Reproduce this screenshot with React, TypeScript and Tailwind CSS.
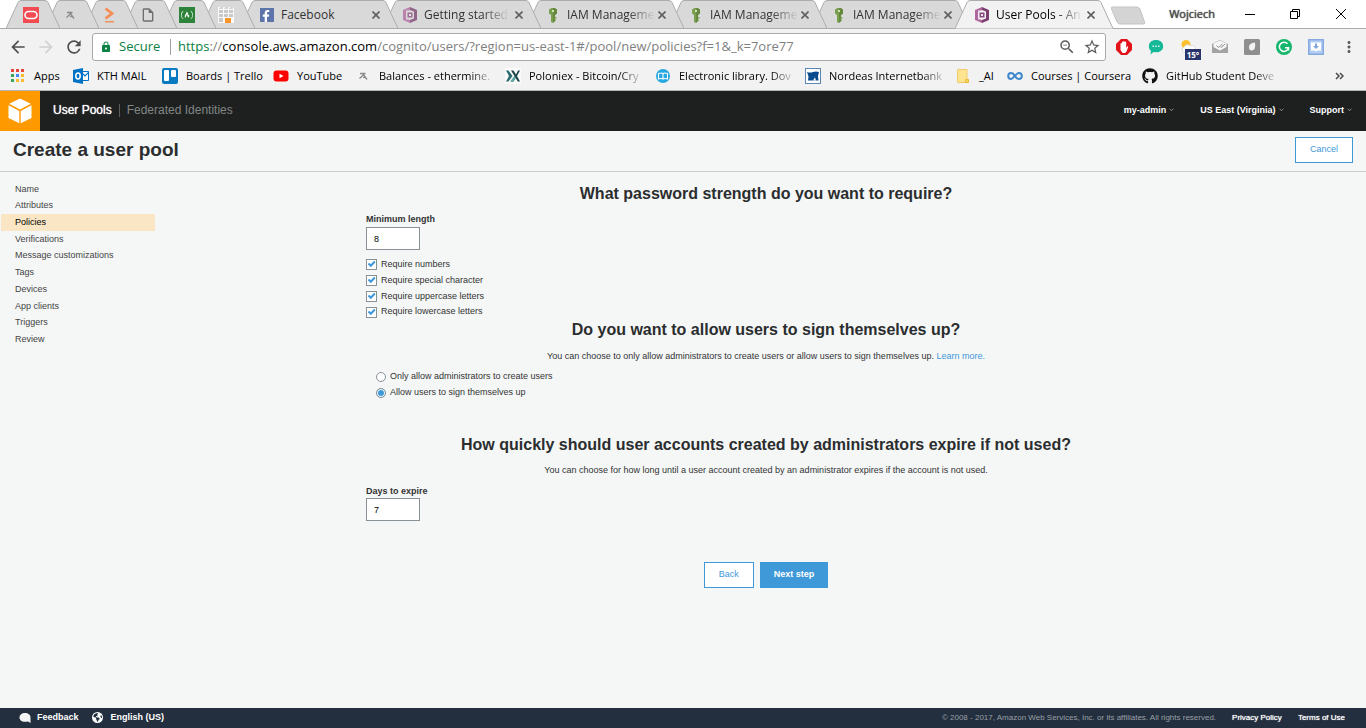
import React from "react";
import {
  MdArrowBack,
  MdArrowForward,
  MdRefresh,
  MdStarBorder,
  MdLock,
  MdMoreVert,
  MdZoomOut,
  MdOutlineInsertDriveFile,
} from "react-icons/md";
import { FaFacebookF, FaFreeCodeCamp, FaGithub } from "react-icons/fa";
import { FaEarthAmericas } from "react-icons/fa6";

/* ---------- icons ---------- */

const OracleIcon = () => (
  <svg width="16" height="16" viewBox="0 0 16 16">
    <rect width="16" height="16" fill="#f24c52" />
    <rect x="2" y="4.5" width="12" height="7" rx="3.5" fill="none" stroke="#fff" strokeWidth="1.6" />
  </svg>
);

const EtherIcon = () => (
  <svg width="16" height="16" viewBox="0 0 16 16" fill="none" stroke="#8a8a8a">
    <path d="M5 5.500h5.500M7.500 5.500L12 11.500M10 5.500L4.500 10.500" strokeWidth="1.300" />
    <path d="M8 9.500h3" strokeWidth="1.200" />
  </svg>
);

const AngleIcon = () => (
  <svg width="16" height="16" viewBox="0 0 16 16" fill="none" stroke="#f58d54" strokeWidth="2.800">
    <path d="M4.500 1.500l6.500 5-6.500 5" />
    <path d="M4 14.800h9" strokeWidth="1.400" />
  </svg>
);

const CampIcon = () => (
  <span className="flex size-4 items-center justify-center bg-[#2c8339] text-[12px] text-white">
    <FaFreeCodeCamp />
  </span>
);

const CubesIcon = () => (
  <svg width="16" height="16" viewBox="0 0 16 16">
    <rect width="16" height="16" fill="#fafafa" />
    <path d="M1 2l1.500-2h3L4.500 2zM6 2l1.500-2h3L9.500 2zM11 2l1.500-2h3L14.500 2z" fill="#d2d2d2" />
    <path d="M1 3h4v3H1zM6 3h4v3H6zM11 3h4v3h-4zM1 7h4v3H1zM6 7h4v3H6zM11 7h4v3h-4zM1 11h4v4H1z" fill="#c9c9c9" />
    <path d="M7 11h6v5H7z" fill="#f7952b" />
  </svg>
);

const FacebookIcon = () => (
  <span className="flex size-[14px] items-end justify-end bg-[#5d74ab] pr-[2px] text-[12px] text-white">
    <FaFacebookF />
  </span>
);

const CognitoIcon = ({ faded }: { faded?: boolean }) => (
  <svg width="16" height="16" viewBox="0 0 16 16" opacity={faded ? 0.75 : 1}>
    <path d="M8 0 1 3v10l7 3v-3l-4-1.500V4.500L8 3z" fill="#b0679f" />
    <path d="M8 0l7 3v10l-7 3v-3l4-1.500V4.500L8 3z" fill="#7c3d70" />
    <path d="M4 3.500h3L4 5zM4 12.500h3L4 11z" fill="#e9d5e5" />
    <path d="M5.500 5.500h5v5h-5z" fill="#8b4a7f" />
    <path d="M7 7h2v2H7z" fill="#efe3ed" />
  </svg>
);

const KeyIcon = () => (
  <svg width="16" height="16" viewBox="0 0 16 16">
    <path d="M4 2.500 6.500 1h3L12 2.500v4L10 8v6l-2 2-2-1V8L4 6.500z" fill="#7a9f4e" />
    <path d="M8 1h1.500L12 2.500v4L10 8v6l-2 2z" fill="#66893e" />
    <path d="M7 3h2v2H7z" fill="#cfdfb8" />
    <path d="M9.500 10H11.500v1.500H9.500zM9.500 12.500H11v1.300H9.500z" fill="#7a9f4e" />
  </svg>
);

const AppsIcon = () => (
  <svg width="14" height="14" viewBox="0 0 14 14">
    <path d="M0 0h3v3H0zM5 0h3v3H5zM10 0h3v3h-3z" fill="#e8453c" />
    <path d="M0 5h3v3H0zM0 10h3v3H0z" fill="#3aa757" />
    <path d="M5 5h3v3H5z" fill="#4587f4" />
    <path d="M10 5h3v3h-3zM10 10h3v3h-3zM5 10h3v3H5z" fill="#f9bb2d" />
  </svg>
);

const OutlookIcon = () => (
  <svg width="16" height="16" viewBox="0 0 16 16">
    <path d="M9 3.500h6.500v9H9z" fill="#fff" stroke="#0072c6" />
    <path d="M9 5l3 3 4-4" fill="none" stroke="#0072c6" strokeWidth="1.200" />
    <path d="M0 2 10 0v16L0 14z" fill="#0072c6" />
    <ellipse cx="5" cy="8" rx="2.200" ry="2.900" fill="none" stroke="#fff" strokeWidth="1.500" />
  </svg>
);

const TrelloIcon = () => (
  <svg width="16" height="16" viewBox="0 0 16 16">
    <rect width="16" height="16" rx="2" fill="#0a7bc1" />
    <rect x="2" y="2" width="5" height="11" rx="1" fill="#fff" />
    <rect x="9" y="2" width="5" height="7" rx="1" fill="#fff" />
  </svg>
);

const YoutubeIcon = () => (
  <svg width="16" height="16" viewBox="0 0 16 16">
    <rect x="0.500" y="2.500" width="15" height="11" rx="3" fill="#f00" />
    <path d="M6.500 5.700 10.500 8l-4 2.300z" fill="#fff" />
  </svg>
);

const PoloniexIcon = () => (
  <svg width="16" height="16" viewBox="0 0 16 16">
    <rect width="16" height="16" fill="#fafafa" />
    <path d="M1 2.500h2.500L7.500 8l-4 5.500H1L4 8z" fill="#2c6a70" />
    <path d="M6 2.500h2.500L11 6.500l2-4h2L12 8l3 5.500h-2.200L10.500 9.800 8.500 13.500H6L9.500 8z" fill="#1d4248" />
    <path d="M5 13.500L9.500 8 11 10l-2.500 3.500z" fill="#5aa6a5" />
  </svg>
);

const LibraryIcon = () => (
  <svg width="16" height="16" viewBox="0 0 16 16">
    <circle cx="8" cy="8" r="7" fill="#27a8e0" />
    <path d="M3.500 5.500Q6 4.500 8 5.500 10 4.500 12.500 5.500v5.500Q10 10 8 11 6 10 3.500 11zM8 5.500V11" fill="none" stroke="#fff" strokeWidth="1.100" />
  </svg>
);

const NordeaIcon = () => (
  <svg width="16" height="16" viewBox="0 0 16 16">
    <rect x="0.500" y="0.500" width="15" height="15" fill="#fff" stroke="#5a87b4" />
    <path d="M2 4q3 1 6 0t6 0l-1 4 .5 4.500H3l.500-4z" fill="#0a4a8f" />
    <path d="M8 12.500l3.500-5.500L10 9.500l1 3z" fill="#fff" />
  </svg>
);

const FolderIcon = () => (
  <svg width="14" height="16" viewBox="0 0 14 16">
    <path d="M1.500 1.500h9.500v10h1.500v3h-11z" fill="#fee391" stroke="#f0cd6a" />
    <path d="M9.500 14.500v-3h3v3z" fill="#fbd35a" stroke="#e8bb3f" />
  </svg>
);

const CourseraIcon = () => (
  <svg width="16" height="16" viewBox="0 0 16 16" fill="none" stroke="#3d87cc" strokeWidth="2">
    <path d="M8 8C6.500 5.500 5.500 5 4.200 5a3 3 0 1 0 0 6C6.500 11 9 5 11.800 5a3 3 0 1 1 0 6C10.500 11 9.500 10.500 8 8z" />
  </svg>
);

const AwsCube = () => (
  <svg width="24" height="26" viewBox="0 0 24 26" fill="#fff">
    <path d="M12 0.500 22.800 5.800 12 11.400 1.200 5.800z" />
    <path d="M0.500 7.300 11.300 13v12.300L0.500 20z" />
    <path d="M23.500 7.300 12.700 13v12.300L23.500 20z" />
  </svg>
);

const BubbleIcon = () => (
  <svg width="12" height="12" viewBox="0 0 12 12" fill="#f4f4f4">
    <path d="M6 1c3.300 0 5.500 1.900 5.500 4.300V11l-2.500-1.600A8 8 0 0 1 6 9.800C2.800 9.800.5 7.900.5 5.400S2.800 1 6 1z" />
  </svg>
);

const Caret = () => (
  <svg width="5" height="4" viewBox="0 0 5 4" fill="none" stroke="#8a8d8d">
    <path d="M0.500 0.700l2 2 2-2" />
  </svg>
);

/* ---------- browser tabs ---------- */

const CloseMark = () => (
  <svg width="8" height="8" viewBox="0 0 8 8" stroke="#5f5f5f" strokeWidth="1.600">
    <path d="M0.500 0.500l7 7M7.500 0.500l-7 7" />
  </svg>
);

type Tab = { icon: React.ReactNode; title?: string; active?: boolean; fade?: boolean; label: string };

const tabs: Tab[] = [
  { icon: <OracleIcon />, label: "Oracle" },
  { icon: <EtherIcon />, label: "Ethermine" },
  { icon: <AngleIcon />, label: "Courses" },
  { icon: <MdOutlineInsertDriveFile className="size-4 text-[#6e6e6e]" />, label: "Document" },
  { icon: <CampIcon />, label: "freeCodeCamp" },
  { icon: <CubesIcon />, label: "Console" },
  { icon: <FacebookIcon />, title: "Facebook", label: "Facebook" },
  { icon: <CognitoIcon faded />, title: "Getting started", fade: true, label: "Getting started" },
  { icon: <KeyIcon />, title: "IAM Manageme", fade: true, label: "IAM Management" },
  { icon: <KeyIcon />, title: "IAM Manageme", fade: true, label: "IAM Management" },
  { icon: <KeyIcon />, title: "IAM Manageme", fade: true, label: "IAM Management" },
  { icon: <CognitoIcon />, title: "User Pools - An", fade: true, active: true, label: "User Pools" },
];

function BrowserTab({ tab, order }: { tab: Tab; order: number }) {
  const w = tab.title ? 158 : 54;
  const fill = tab.active ? "#f2f2f2" : "#d9d9d9";
  return (
    <div
      className={`relative -mr-[15px] flex h-[29px] shrink-0 items-center ${
        tab.title ? "w-[158px] pl-[19px] pr-[18px]" : "w-[54px] justify-center pr-[4px]"
      }`}
      style={{ zIndex: tab.active ? 20 : order }}
    >
      <svg className="absolute inset-0" width={w} height="29" viewBox={`0 0 ${w} 29`}>
        <path
          d={`M0 28.500L12 2.500Q13 0.500 15 0.500H${w - 15}Q${w - 13} 0.500 ${w - 12} 2.500L${w} 28.500`}
          fill={fill}
          stroke="#acacac"
        />
        {!tab.active && <path d={`M0 28.500H${w}`} stroke="#acacac" />}
      </svg>
      <button
        aria-label={tab.label}
        className={`relative flex items-center text-left text-[12px] leading-[16px] ${
          tab.active ? "text-black" : "text-[#333]"
        }`}
      >
        <span className="flex w-4 shrink-0 justify-center">{tab.icon}</span>
        {tab.title && (
          <span
            className={`ml-[6px] whitespace-nowrap ${
              tab.fade ? "[mask-image:linear-gradient(to_right,#000_70%,rgba(0,0,0,0.05))]" : ""
            }`}
          >
            {tab.title}
          </span>
        )}
      </button>
      {tab.title && (
        <button aria-label="Close tab" className="absolute right-[18px] top-[11px]">
          <CloseMark />
        </button>
      )}
    </div>
  );
}

function TabStrip() {
  return (
    <div className="relative flex h-[29px] items-start bg-white pl-[6px]">
      <div className="absolute inset-x-0 bottom-0 h-px bg-[#acacac]" />
      {tabs.map((t, i) => (
        <BrowserTab key={i} tab={t} order={tabs.length - i} />
      ))}
      <button aria-label="New tab" className="relative ml-[12px] mt-[6px]">
        <svg width="36" height="19" viewBox="0 0 36 19">
          <path d="M2.500 1h24.500q2 0 3 2l4.500 13q1 2-1 2H10q-2 0-3-2L1.500 3q-1-2 1-2z" fill="#d4d4d4" stroke="#c4c4c4" />
        </svg>
      </button>
      <div className="ml-auto flex h-[28px] items-center">
        <span className="mr-[30px] text-[11px] text-[#555] [text-shadow:0_0_1px_#000]">Wojciech</span>
        <button aria-label="Minimize" className="mr-[35px]">
          <svg width="10" height="10" viewBox="0 0 10 10" stroke="#000">
            <path d="M0 5.500h10" />
          </svg>
        </button>
        <button aria-label="Restore" className="mr-[36px]">
          <svg width="10" height="10" viewBox="0 0 10 10" fill="none" stroke="#000">
            <path d="M0.500 2.500h7v7h-7zM2.500 2.500v-2h7v7h-2" />
          </svg>
        </button>
        <button aria-label="Close" className="mr-[20px]">
          <svg width="10" height="10" viewBox="0 0 10 10" stroke="#000">
            <path d="M0 0l10 10M10 0L0 10" />
          </svg>
        </button>
      </div>
    </div>
  );
}

/* ---------- toolbar ---------- */

function Extensions() {
  return (
    <div className="flex items-center gap-4">
      <button aria-label="Ad blocker">
        <svg width="16" height="16" viewBox="0 0 16 16">
          <path d="M5 0h6l5 5v6l-5 5H5l-5-5V5z" fill="#e2121b" />
          <path d="M4.500 8V4.500q.7-.8 1.400 0V3q.7-.8 1.400 0v-.5q.7-.8 1.400 0V3q.8-.8 1.500 0v6l1-1.500q.8-.4 1 .4L10.500 12.500 9 14H6.500L4.500 11z" fill="#fff" />
        </svg>
      </button>
      <button aria-label="Chat">
        <svg width="16" height="16" viewBox="0 0 16 16">
          <path d="M8 1c4.300 0 7.200 2.700 7.200 6.200S12.300 13.300 8 13.300L5.500 13 2.500 15.500 3 12A6 6 0 0 1 .8 7.200C.8 3.700 3.700 1 8 1z" fill="#17b897" />
          <path d="M4.500 6.500h1.500V8H4.500zM7.300 6.500h1.500V8H7.300zM10 6.500h1.500V8H10z" fill="#d8f5ee" />
        </svg>
      </button>
      <button aria-label="Weather" className="relative">
        <svg width="16" height="16" viewBox="0 0 16 16">
          <circle cx="6" cy="5.500" r="4.500" fill="#fdc12d" />
          <path d="M4 13a2.700 2.700 0 0 1 0-5 4 4 0 0 1 6.500-1A3.200 3.200 0 0 1 14 13z" fill="#fff" stroke="#cfcfcf" strokeWidth=".7" />
        </svg>
        <span className="absolute left-[5px] top-[10px] h-[11px] w-[16px] bg-[#29356b] text-center text-[8px] font-bold leading-[11px] text-white">
          15°
        </span>
      </button>
      <button aria-label="Mail">
        <svg width="16" height="16" viewBox="0 0 16 16">
          <path d="M0 5l8-4 8 4v9H0z" fill="#a3a3a3" />
          <path d="M1.500 4.500L8 1.500l6.500 3V8L8 11.500 1.500 8z" fill="#f7f7f7" />
          <path d="M4.500 6.500l2 2 4-3.500M8.500 7.800l.7.7L13 5" fill="none" stroke="#8d8d8d" />
        </svg>
      </button>
      <button aria-label="Extension">
        <svg width="16" height="16" viewBox="0 0 16 16">
          <rect width="16" height="16" rx="1.500" fill="#8f8f8f" />
          <path d="M5 8q0-4 6-4.500 1 8-3.500 8Q5 11.500 5 8z" fill="#f3f3f3" />
        </svg>
      </button>
      <button aria-label="Grammarly">
        <svg width="16" height="16" viewBox="0 0 16 16">
          <circle cx="8" cy="8" r="8" fill="#15b56c" />
          <path d="M11.500 4.800A4.600 4.600 0 1 0 12.500 8.800H9M12.500 8.500v3" fill="none" stroke="#fff" strokeWidth="1.500" />
        </svg>
      </button>
      <button aria-label="Downloads">
        <svg width="16" height="16" viewBox="0 0 16 16">
          <rect x="0.750" y="0.750" width="14.500" height="14.500" fill="#b4cdf2" stroke="#86a9e0" strokeWidth="1.500" />
          <path d="M3 3.500h10v8H9L8 13l-1-1.500H3z" fill="#fff" />
          <path d="M7 4.500h2V7h2L8 10 5 7h2z" fill="#7fa4de" />
        </svg>
      </button>
      <button aria-label="Menu" className="text-[#5a5a5a]">
        <MdMoreVert className="size-[18px]" />
      </button>
    </div>
  );
}

function Toolbar() {
  return (
    <div className="flex h-[36px] items-center bg-[#f2f2f2] pl-[8px] pr-[8px]">
      <button aria-label="Back" className="mr-[8px] text-[#4f4f4f]">
        <MdArrowBack className="size-5" />
      </button>
      <button aria-label="Forward" className="mr-[8px] text-[#d0d0d0]">
        <MdArrowForward className="size-5" />
      </button>
      <button aria-label="Reload" className="mr-[8px] text-[#4f4f4f]">
        <MdRefresh className="size-5" />
      </button>
      <div className="mr-[10px] flex h-[28px] min-w-0 flex-1 items-center rounded-[3px] border border-[#a9a9a9] bg-white pl-[7px] pr-[4px] text-[13px]">
        <MdLock className="size-3 text-[#0b8043]" />
        <span className="ml-[7px] w-[44px] text-[#0b8043]">Secure</span>
        <span className="mx-[7px] h-[16px] w-px bg-[#a0a0a0]" />
        <div
          role="textbox"
          aria-label="Address"
          tabIndex={0}
          className="min-w-0 flex-1 whitespace-nowrap text-[#808080]"
        >
          <span className="text-[#0b8043]">https</span>://<span className="text-black">console.aws.amazon.com</span>
          /cognito/users/?region=us-east-1#/pool/new/policies?f=1&amp;_k=7ore77
        </div>
        <button aria-label="Zoom" className="mr-[7px] text-[#5a5a5a]">
          <MdZoomOut className="size-[18px]" />
        </button>
        <button aria-label="Bookmark" className="text-[#5a5a5a]">
          <MdStarBorder className="size-[18px]" />
        </button>
      </div>
      <Extensions />
    </div>
  );
}

const bookmarks: { icon: React.ReactNode; label: string; width: string; fade?: boolean }[] = [
  { icon: <AppsIcon />, label: "Apps", width: "w-[63px]" },
  { icon: <OutlookIcon />, label: "KTH MAIL", width: "w-[89px]" },
  { icon: <TrelloIcon />, label: "Boards | Trello", width: "w-[111px]" },
  { icon: <YoutubeIcon />, label: "YouTube", width: "w-[82px]" },
  { icon: <EtherIcon />, label: "Balances - ethermine.", width: "w-[150px]", fade: true },
  { icon: <PoloniexIcon />, label: "Poloniex - Bitcoin/Cry", width: "w-[150px]", fade: true },
  { icon: <LibraryIcon />, label: "Electronic library. Dov", width: "w-[150px]", fade: true },
  { icon: <NordeaIcon />, label: "Nordeas Internetbank", width: "w-[150px]", fade: true },
  { icon: <FolderIcon />, label: "_AI", width: "w-[52px]" },
  { icon: <CourseraIcon />, label: "Courses | Coursera", width: "w-[135px]" },
  { icon: <FaGithub className="size-4 text-[#111]" />, label: "GitHub Student Deve", width: "w-[150px]", fade: true },
];

function BookmarksBar() {
  return (
    <div className="flex h-[26px] items-center border-b border-[#b6b4b6] bg-[#f2f2f2] pb-[4px] pl-[10px] text-[11px] leading-[16px] text-black">
      {bookmarks.map((b) => (
        <a key={b.label} href="#" className={`flex shrink-0 items-center ${b.width}`}>
          <span className="flex w-4 shrink-0 justify-center">{b.icon}</span>
          <span
            className={`ml-[8px] whitespace-nowrap ${
              b.fade ? "[mask-image:linear-gradient(to_right,#000_82%,rgba(0,0,0,0.2))]" : ""
            }`}
          >
            {b.label}
          </span>
        </a>
      ))}
      <button aria-label="More bookmarks" className="ml-auto mr-[22px]">
        <svg width="9" height="8" viewBox="0 0 9 8" fill="none" stroke="#4a4a4a" strokeWidth="1.500">
          <path d="M1 1l3 3-3 3M5 1l3 3-3 3" />
        </svg>
      </button>
    </div>
  );
}

/* ---------- console page ---------- */

const steps = [
  "Name",
  "Attributes",
  "Policies",
  "Verifications",
  "Message customizations",
  "Tags",
  "Devices",
  "App clients",
  "Triggers",
  "Review",
];

function ConsoleHeader() {
  return (
    <header className="flex h-[40px] items-center bg-[#1d201f] text-white">
      <a href="#" aria-label="Services" className="flex size-[40px] items-center justify-center bg-[#ff9900]">
        <AwsCube />
      </a>
      <nav className="ml-[13px] flex items-center pb-[2px] text-[12px] leading-[14px]">
        <a href="#" className="[text-shadow:0_0_1px_#fff]">
          User Pools
        </a>
        <span className="mx-[7px] h-[13px] w-px bg-[#5a5d5d]" />
        <a href="#" className="text-[#828685]">
          Federated Identities
        </a>
      </nav>
      <div className="ml-auto flex items-center gap-[26px] pb-[2px] pr-[14px] text-[9px] font-bold leading-[12px]">
        {["my-admin", "US East (Virginia)", "Support"].map((m) => (
          <button key={m} className="flex items-center gap-[3px]">
            {m}
            <Caret />
          </button>
        ))}
      </div>
    </header>
  );
}

function Check({ label }: { label: string }) {
  return (
    <label className="flex flex-1 items-center gap-[4px]">
      <span className="relative size-[11px]">
        <input
          type="checkbox"
          defaultChecked
          className="peer block size-[11px] appearance-none border border-[#879196] bg-white"
        />
        <svg
          className="pointer-events-none absolute inset-0 hidden peer-checked:block"
          width="11"
          height="11"
          viewBox="0 0 11 11"
          fill="none"
          stroke="#3f98d8"
          strokeWidth="2"
        >
          <path d="M2.500 4.500l2.300 2.300 4-4.300" />
        </svg>
      </span>
      {label}
    </label>
  );
}

function Radio({ label, checked }: { label: string; checked?: boolean }) {
  return (
    <label className="flex h-[16px] items-center gap-[4px]">
      <input
        type="radio"
        name="signup"
        defaultChecked={checked}
        className="size-[10px] appearance-none rounded-full border border-[#879196] bg-white checked:bg-[#3f98d8] checked:shadow-[inset_0_0_0_1px_#fff]"
      />
      {label}
    </label>
  );
}

const headingClass = "text-center text-[16px] font-bold leading-[20px] text-[#2b2d2e]";
const numberClass =
  "block h-[23px] w-[54px] border border-[#879196] bg-white px-[7px] text-[9px] text-black";

export default function App() {
  return (
    <div className="flex min-h-screen flex-col bg-[#f5f7f7] font-['Liberation_Sans',Arial,sans-serif]">
      <div className="overflow-hidden font-['Open_Sans','Noto_Sans',sans-serif]">
        <TabStrip />
        <Toolbar />
        <BookmarksBar />
      </div>

      <ConsoleHeader />

      <div className="flex h-[41px] items-center justify-between border-b border-[#c8cccc] pb-[2px] pl-[13px] pr-[13px]">
        <h1 className="text-[19px] font-bold leading-[24px] text-[#2b2d2e]">Create a user pool</h1>
        <button className="h-[26px] border border-[#3f98d8] bg-white px-[14px] text-[9px] text-[#3f98d8]">Cancel</button>
      </div>

      <div className="flex flex-1 items-start text-[9px] text-[#333]">
        <nav aria-label="Steps" className="ml-px mr-[11px] mt-[9px] flex h-[167px] w-[154px] shrink-0 flex-col">
          {steps.map((s) => (
            <a
              key={s}
              href="#"
              className={`flex flex-1 items-center pl-[14px] ${s === "Policies" ? "bg-[#fae5c5] text-black" : "text-[#444]"}`}
            >
              {s}
            </a>
          ))}
        </nav>

        <main className="min-w-0 flex-1">
          <form className="mx-auto max-w-[800px] pt-[12px]">
            <h2 className={headingClass}>What password strength do you want to require?</h2>
            <label htmlFor="min-length" className="mt-[9px] block font-bold leading-[12px]">
              Minimum length
            </label>
            <input id="min-length" type="text" defaultValue="8" className={`mt-[2px] ${numberClass}`} />
            <div className="mt-[7px] flex h-[63px] flex-col">
              <Check label="Require numbers" />
              <Check label="Require special character" />
              <Check label="Require uppercase letters" />
              <Check label="Require lowercase letters" />
            </div>

            <h2 className={headingClass}>Do you want to allow users to sign themselves up?</h2>
            <p className="mt-[10px] text-center leading-[12px]">
              You can choose to only allow administrators to create users or allow users to sign themselves up.{" "}
              <a href="#" className="text-[#3f98d8]">
                Learn more.
              </a>
            </p>
            <div className="mt-[7px] pl-[10px]">
              <Radio label="Only allow administrators to create users" />
              <Radio label="Allow users to sign themselves up" checked />
            </div>

            <h2 className={`mt-[34px] ${headingClass}`}>
              How quickly should user accounts created by administrators expire if not used?
            </h2>
            <p className="mt-[9px] text-center leading-[12px]">
              You can choose for how long until a user account created by an administrator expires if the account is not used.
            </p>
            <label htmlFor="days" className="mt-[9px] block font-bold leading-[12px]">
              Days to expire
            </label>
            <input id="days" type="text" defaultValue="7" className={`mt-px ${numberClass}`} />

            <div className="mt-[41px] flex justify-center gap-[6px]">
              <button type="button" className="h-[26px] border border-[#3f98d8] bg-white px-[14px] text-[#3f98d8]">
                Back
              </button>
              <button type="submit" className="h-[26px] bg-[#3f98d8] px-[14px] font-bold text-white">
                Next step
              </button>
            </div>
          </form>
        </main>
      </div>

      <footer className="flex h-[20px] items-center bg-[#232f3e] pb-px pl-[19px] pr-[21px] text-[8px] text-white">
        <button className="flex items-center gap-[6px] text-[9px] font-bold">
          <BubbleIcon />
          Feedback
        </button>
        <button className="ml-[13px] flex items-center gap-[8px] text-[9px] font-bold">
          <FaEarthAmericas className="size-[11px]" />
          English (US)
        </button>
        <span className="ml-auto text-[#999fa6]">
          © 2008 - 2017, Amazon Web Services, Inc. or its affiliates. All rights reserved.
        </span>
        <a href="#" className="ml-[16px] [text-shadow:0_0_1px_#fff]">
          Privacy Policy
        </a>
        <a href="#" className="ml-[16px] [text-shadow:0_0_1px_#fff]">
          Terms of Use
        </a>
      </footer>
    </div>
  );
}
